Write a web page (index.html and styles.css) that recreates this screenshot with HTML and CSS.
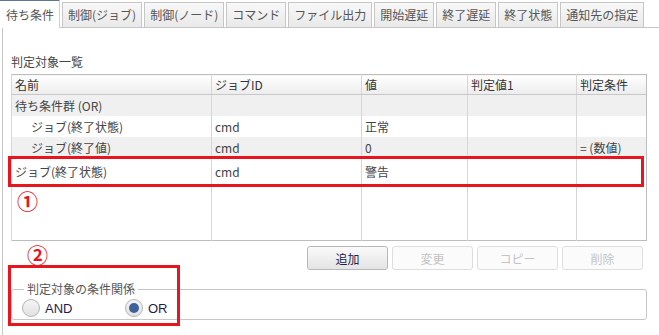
FILE: index.html
```html
<!DOCTYPE html>
<html lang="ja">
<head>
    <meta charset="UTF-8">
    <title>待ち条件</title>
    <link rel="stylesheet" href="styles.css">
</head>
<body>
    <div class="tabs">
        <div class="tab active">待ち条件</div>
        <div class="tab">制御(ジョブ)</div>
        <div class="tab">制御(ノード)</div>
        <div class="tab">コマンド</div>
        <div class="tab">ファイル出力</div>
        <div class="tab">開始遅延</div>
        <div class="tab">終了遅延</div>
        <div class="tab">終了状態</div>
        <div class="tab">通知先の指定</div>
    </div>

    <div class="panel">
        <div class="caption">判定対象一覧</div>

        <div class="grid-wrap">
            <table class="grid">
                <colgroup>
                    <col class="c1"><col class="c2"><col class="c3"><col class="c4"><col class="c5">
                </colgroup>
                <thead>
                    <tr><th>名前</th><th>ジョブID</th><th>値</th><th>判定値1</th><th>判定条件</th></tr>
                </thead>
                <tbody>
                    <tr class="odd"><td>待ち条件群 (OR)</td><td></td><td></td><td></td><td></td></tr>
                    <tr><td class="indent">ジョブ(終了状態)</td><td>cmd</td><td>正常</td><td></td><td></td></tr>
                    <tr class="odd"><td class="indent">ジョブ(終了値)</td><td>cmd</td><td>0</td><td></td><td>= (数値)</td></tr>
                    <tr class="sel"><td>ジョブ(終了状態)</td><td>cmd</td><td>警告</td><td></td><td></td></tr>
                    <tr class="filler"><td></td><td></td><td></td><td></td><td></td></tr>
                </tbody>
            </table>
            <div class="mark mark-row"></div>
            <div class="num num-1">①</div>
        </div>

        <div class="buttons">
            <button class="btn">追加</button>
            <button class="btn" disabled>変更</button>
            <button class="btn" disabled>コピー</button>
            <button class="btn" disabled>削除</button>
        </div>

        <div class="relation">
            <div class="num num-2">②</div>
            <fieldset class="group">
                <legend>判定対象の条件関係</legend>
                <label class="radio"><span class="dot"></span>AND</label>
                <label class="radio"><span class="dot on"></span>OR</label>
            </fieldset>
            <div class="mark mark-group"></div>
        </div>
    </div>
</body>
</html>
```

FILE: styles.css
```css
body {
    margin: 0;
    width: 659px;
    height: 335px;
    overflow: hidden;
    background: #ffffff;
    font-family: "Noto Sans CJK JP", "Noto Sans", sans-serif;
    font-size: 12px;
    color: #333333;
}

/* タブ */
.tabs {
    display: flex;
    align-items: flex-end;
    height: 28px;
    border-bottom: 1px solid #c6c6c6;
    box-sizing: border-box;
    gap: 2px;
}
.tab {
    height: 25px;
    line-height: 24px;
    padding: 0 5px;
    box-sizing: border-box;
    border: 1px solid #c6c6c6;
    border-bottom: none;
    background: linear-gradient(#f8f8f8, #e9e9e9);
    color: #555555;
    white-space: nowrap;
}
.tab.active {
    height: 29px;
    line-height: 28px;
    margin-bottom: -1px;
    border: none;
    border-top: 2px solid #5b7896;
    border-right: 1px solid #d0d0d0;
    background: #ffffff;
    width: 60px;
    padding: 0 6px;
}

/* パネル */
.panel {
    border-left: 1px solid #c6c6c6;
    margin-left: 2px;
    height: 307px;
    padding: 25px 0 0 8px;
    box-sizing: border-box;
}
.caption {
    height: 21px;
    line-height: 18px;
    color: #444444;
}

/* 一覧 */
.grid-wrap {
    position: relative;
    width: 636px;
}
.grid {
    width: 636px;
    border-collapse: collapse;
    table-layout: fixed;
    border: 1px solid #bdbdbd;
}
.c1 { width: 200px; }
.c2 { width: 150px; }
.c3 { width: 106px; }
.c4 { width: 109px; }
.grid th,
.grid td {
    border-left: 1px solid #d6d6d6;
    padding: 0 3px;
    text-align: left;
    font-weight: normal;
    white-space: nowrap;
    overflow: hidden;
}
.grid th {
    height: 19px;
    line-height: 19px;
    background: linear-gradient(#ffffff, #ececec);
    border-bottom: 1px solid #c8c8c8;
    color: #333333;
}
.grid td {
    height: 21px;
    line-height: 21px;
    color: #444444;
}
.grid tr.odd td {
    background: #f0f0f0;
}
.grid tr.sel td {
    height: 27px;
    line-height: 27px;
}
.grid td.indent {
    padding-left: 19px;
}
.grid tr.filler td {
    height: 55px;
}

/* 注記 */
.mark {
    position: absolute;
    border: 3px solid #e8151f;
}
.mark-row {
    left: -3px;
    top: 82px;
    width: 630px;
    height: 25px;
}
.num {
    position: absolute;
    color: #e8151f;
    font-size: 21px;
    font-weight: bold;
    line-height: 20px;
}
.num-1 {
    left: 6px;
    top: 116px;
}

/* ボタン */
.buttons {
    display: flex;
    justify-content: flex-end;
    gap: 4px;
    width: 632px;
    margin-top: 5px;
}
.btn {
    width: 81px;
    height: 24px;
    border: 1px solid #b8b8b8;
    border-radius: 3px;
    background: linear-gradient(#fafafa, #e4e4e4);
    font-family: inherit;
    font-size: 12px;
    color: #1d1d4a;
    padding: 0;
}
.btn:disabled {
    border-color: #dedede;
    background: #fbfbfb;
    color: #c4c4c4;
}

/* 条件関係 */
.relation {
    position: relative;
    margin-top: 12px;
    width: 636px;
}
.num-2 {
    left: 16px;
    top: -38px;
}
.group {
    margin: 0;
    padding: 1px 0 0 10px;
    width: 636px;
    height: 38px;
    box-sizing: border-box;
    border: 1px solid #c6c6c6;
    border-radius: 3px;
    display: flex;
    align-items: center;
}
.group legend {
    padding: 0 3px;
    margin-left: 2px;
    color: #555555;
    line-height: 14px;
}
.radio {
    display: flex;
    align-items: center;
    gap: 5px;
    width: 103px;
    color: #1d1d4a;
    font-family: "Liberation Sans", "Noto Sans CJK JP", sans-serif;
    font-size: 13px;
}
.dot {
    width: 18px;
    height: 18px;
    box-sizing: border-box;
    border-radius: 50%;
    border: 1px solid #b5b5b5;
    background: linear-gradient(#f4f4f4, #e2e2e2);
    display: flex;
    align-items: center;
    justify-content: center;
}
.dot.on::after {
    content: "";
    width: 10px;
    height: 10px;
    border-radius: 50%;
    background: #3d6299;
}
.mark-group {
    left: -3px;
    top: -17px;
    width: 166px;
    height: 55px;
}
```
